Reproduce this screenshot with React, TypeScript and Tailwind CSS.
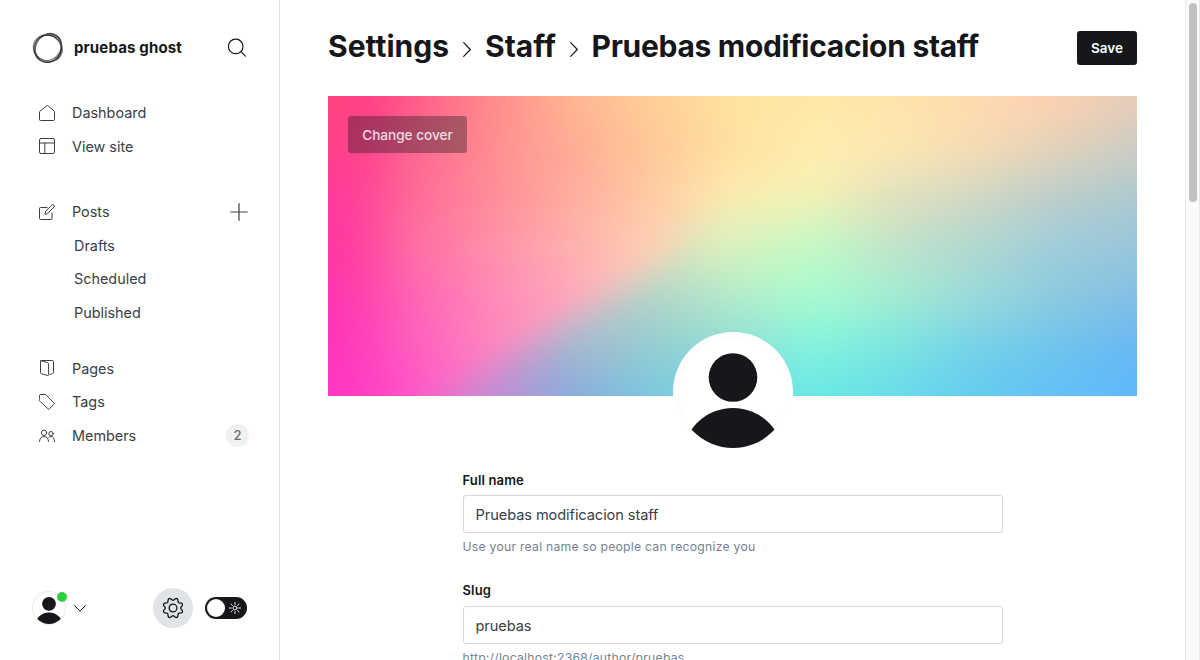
import React from "react";

const COVER_W = 809;
const COVER_H = 300;
const BLEED = 50;

const stops = [0, 0.05, 0.1, 0.2, 0.3, 0.4, 0.5, 0.6, 0.7, 0.8, 0.9, 1];

// Colour meshes of the cover: each row is a horizontal band edge, evenly spaced.
const warmMesh: string[][] = [
  ["#ff4580", "#ff3f85", "#ff5888", "#ff8a8c", "#ffb592", "#ffcf98", "#ffe39e", "#fee8a6", "#fee3aa", "#ffdab0", "#ffd0b0", "#e6cdb8"],
  ["#ff3f88", "#ff448c", "#ff6490", "#ff8c90", "#ffac94", "#ffc898", "#ffe0a0", "#ffeeb0", "#fee8b2", "#f8dcb4", "#e5d3ba", "#cecdc4"],
  ["#ff389b", "#ff4898", "#ff6898", "#ff8c9a", "#ffad9e", "#ffcba4", "#ffecb0", "#f4f2b4", "#e2e0be", "#d2d8c4", "#bccdca", "#accace"],
  ["#ff34a0", "#ff489f", "#ff6ca4", "#ff90a8", "#ffb0b0", "#ffd0b4", "#dcf2be", "#c2fac6", "#c0e4ca", "#b0d8d0", "#a0cdda", "#98c6dc"],
  ["#ff33b0", "#ff46b0", "#ff62b4", "#ff88b8", "#ffa8bc", "#fcccc0", "#b2ecca", "#a8fcd0", "#a4ecd2", "#9cdada", "#8ccade", "#84bfe4"],
  ["#ff33ba", "#ff42bc", "#ff5cc0", "#ff86be", "#ffa0c4", "#f0b8c8", "#94dcd8", "#84f4dc", "#7ce6e0", "#76d2e8", "#70c4ee", "#68b8f4"],
  ["#ff36c4", "#ff40c4", "#ff54c8", "#f87ccc", "#e894d0", "#c0b0d8", "#70dce4", "#68e8e4", "#68dcea", "#64ccf0", "#62c0f6", "#60b8fa"],
];

const coolMesh: string[][] = [
  warmMesh[0],
  warmMesh[1],
  ["#f0a0b0", "#f0a0b0", "#f0a0b0", "#f0a8b4", "#f0c4b4", "#ece0b4", "#f8ecb2", ...warmMesh[2].slice(7)],
  ["#e898b8", "#e898b8", "#e89cb8", "#e8a4bc", "#e4c4bc", "#d8dcbc", ...warmMesh[3].slice(6)],
  ["#e080c0", "#e080c0", "#e088c4", "#dca4c6", "#ccbcc6", "#b4d4c8", ...warmMesh[4].slice(6)],
  ["#e870c8", "#e870c8", "#e478cc", "#d090cc", "#a8b8d0", "#94ced0", ...warmMesh[5].slice(6)],
  ["#f050c8", "#f050c8", "#e868cc", "#c48cd4", "#88acdc", "#7cc8e0", ...warmMesh[6].slice(6)],
];

function Mesh({ id, rows }: { id: string; rows: string[][] }) {
  const bands = rows.length - 1;
  const h = COVER_H / bands;
  const wide = { x: -BLEED, width: COVER_W + 2 * BLEED };
  return (
    <g>
      <defs>
        {rows.map((row, i) => (
          <linearGradient key={i} id={`${id}-row${i}`} gradientUnits="userSpaceOnUse" x1="0" x2={COVER_W} y1="0" y2="0">
            {row.map((c, j) => (
              <stop key={j} offset={stops[j]} stopColor={c} />
            ))}
          </linearGradient>
        ))}
        <linearGradient id={`${id}-fade`} x1="0" x2="0" y1="0" y2="1">
          <stop offset="0" stopColor="#fff" stopOpacity="0" />
          <stop offset="1" stopColor="#fff" stopOpacity="1" />
        </linearGradient>
        {rows.slice(1).map((_, i) => (
          <mask key={i} id={`${id}-band${i}`} maskUnits="userSpaceOnUse" {...wide} y={i * h} height={h}>
            <rect {...wide} y={i * h} height={h} fill={`url(#${id}-fade)`} />
          </mask>
        ))}
      </defs>
      <rect {...wide} y={-BLEED} height={BLEED} fill={`url(#${id}-row0)`} />
      <rect {...wide} y={COVER_H} height={BLEED} fill={`url(#${id}-row${bands})`} />
      {rows.slice(1).map((_, i) => (
        <g key={i}>
          <rect {...wide} y={i * h} height={h} fill={`url(#${id}-row${i})`} />
          <rect {...wide} y={i * h} height={h} fill={`url(#${id}-row${i + 1})`} mask={`url(#${id}-band${i})`} />
        </g>
      ))}
    </g>
  );
}

function CoverArt() {
  const area = { x: -BLEED, y: -BLEED, width: COVER_W + 2 * BLEED, height: COVER_H + 2 * BLEED };
  return (
    <svg className="block h-full w-full overflow-hidden" viewBox={`0 0 ${COVER_W} ${COVER_H}`} preserveAspectRatio="none" aria-hidden="true">
      <defs>
        <filter id="smooth" filterUnits="userSpaceOnUse" {...area} colorInterpolationFilters="sRGB">
          <feGaussianBlur stdDeviation="14" />
        </filter>
        <filter id="edge" filterUnits="userSpaceOnUse" x="-100" y="-100" width="1100" height="600">
          <feGaussianBlur stdDeviation="16" />
        </filter>
        <mask id="cool-side" maskUnits="userSpaceOnUse" {...area}>
          <path d="M30 360L105 308 160 272 220 232 290 192 350 155 410 103 480 60H1000V460H30z" fill="#fff" filter="url(#edge)" />
        </mask>
      </defs>
      <g filter="url(#smooth)">
        <Mesh id="warm" rows={warmMesh} />
      </g>
      <g mask="url(#cool-side)">
        <g filter="url(#smooth)">
          <Mesh id="cool" rows={coolMesh} />
        </g>
      </g>
    </svg>
  );
}

type IconProps = { children: React.ReactNode; className?: string };
function Icon16({ children, className = "" }: IconProps) {
  return (
    <svg className={`block h-4 w-4 shrink-0 ${className}`} viewBox="0 0 16 16" fill="none" stroke="#394047" strokeWidth="1" strokeLinecap="round" strokeLinejoin="round">
      {children}
    </svg>
  );
}

function Logo() {
  return (
    <svg className="block h-8 w-8" viewBox="0 0 32 32" fill="none" stroke="#15171a">
      <circle cx="15.500" cy="16.800" r="13.600" strokeWidth="1.200" opacity=".7" />
      <ellipse cx="16.900" cy="15.500" rx="14.200" ry="12.500" strokeWidth="1.300" opacity=".5" transform="rotate(-50 16 16)" />
      <ellipse cx="16.500" cy="16" rx="12.600" ry="14.600" strokeWidth="1.200" opacity=".5" transform="rotate(32 16 16)" />
      <ellipse cx="16" cy="16.300" rx="14.900" ry="12.900" strokeWidth="1.100" opacity=".5" transform="rotate(25 16 16)" />
      <path d="M15 2.600c5.500-1.500 11 1 13.500 6.500" strokeWidth="2.600" opacity=".3" />
      <path d="M29.500 17c0 4-2 8-5.500 10.500" strokeWidth="2.400" opacity=".3" />
    </svg>
  );
}

function Avatar({ className }: { className: string }) {
  return (
    <svg className={className} viewBox="0 0 112 112">
      <defs>
        <clipPath id="disc">
          <circle cx="56" cy="56" r="56" />
        </clipPath>
      </defs>
      <g clipPath="url(#disc)" fill="#15171a">
        <circle cx="56" cy="41.500" r="24.300" />
        <circle cx="56" cy="122.700" r="50.700" />
      </g>
    </svg>
  );
}

const gearOutline =
  Array.from({ length: 128 }, (_, i) => {
    const a = (i / 128) * Math.PI * 2;
    const r = 8.95 - 1.25 * Math.cos(8 * a);
    return `${i === 0 ? "M" : "L"}${(11 + r * Math.cos(a)).toFixed(2)} ${(11 + r * Math.sin(a)).toFixed(2)}`;
  }).join("") + "z";

function NavItem({ label, icon, children }: { label: string; icon: React.ReactNode; children?: React.ReactNode }) {
  return (
    <a className="flex h-[33.6px] items-center pr-[31px] pl-[39px]">
      {icon}
      <span className="ml-[17px] flex-1 text-[14.4px] leading-[21.75px]">{label}</span>
      {children}
    </a>
  );
}

function SubItem({ label }: { label: string }) {
  return <a className="flex h-[33.6px] items-center pl-[74px] text-[14.4px] leading-[21.75px]">{label}</a>;
}

function Sidebar() {
  return (
    <aside className="flex h-full w-[280px] shrink-0 flex-col border-r border-[#dfe1e3] text-[#394047]">
      <div className="flex h-24 items-center pr-[32px] pl-8">
        <Logo />
        <span className="ml-[10px] flex-1 text-[15px] font-bold tracking-[0.15px] text-[#15171a]">pruebas ghost</span>
        <svg className="block h-5 w-5" viewBox="0 0 20 20" fill="none" stroke="#15171a" strokeWidth="1.200" strokeLinecap="round">
          <circle cx="8.700" cy="8.400" r="7.300" />
          <path d="M13.900 13.600L18.400 18.100" />
        </svg>
      </div>

      <nav className="flex flex-col">
        <NavItem label="Dashboard" icon={<Icon16><path d="M8 .5L.5 6.700V14.500a1 1 0 0 0 1 1h13a1 1 0 0 0 1-1V6.700z" /></Icon16>} />
        <NavItem
          label="View site"
          icon={
            <Icon16 className="-mt-px">
              <rect x=".5" y=".5" width="15" height="15" rx="1.500" />
              <path d="M.5 5h15M5.800 5v10.500" />
            </Icon16>
          }
        />
        <div className="h-8" />
        <NavItem
          label="Posts"
          icon={
            <Icon16>
              <path d="M8 3.500H1.500a1 1 0 0 0-1 1v10a1 1 0 0 0 1 1h10.500a1 1 0 0 0 1-1V9" />
              <path d="M6 10l.7-2.800 6.200-6.200a1.300 1.300 0 0 1 2 2L8.800 9.300z" />
            </Icon16>
          }
        >
          <svg className="block h-[18px] w-[18px]" viewBox="0 0 18 18" stroke="#394047" strokeWidth="1.200">
            <path d="M9 .3v17.400M.3 9h17.400" />
          </svg>
        </NavItem>
        <SubItem label="Drafts" />
        <SubItem label="Scheduled" />
        <SubItem label="Published" />
        <div className="h-[22.300px]" />
        <NavItem
          label="Pages"
          icon={
            <Icon16 className="-mt-px">
              <path d="M1.500 1.200v11.300q0 .8.8 1.100l6.200 1.900q1.100.3 1.100-.8V3.900q0-.9-.9-1.200L2 .7" />
              <path d="M2 .5h11.500q1 0 1 1v11q0 1-1 1.100L11 14.500" />
            </Icon16>
          }
        />
        <NavItem
          label="Tags"
          icon={<Icon16><path d="M.5 1.500a1 1 0 0 1 1-1h5.200L15.500 9.600 9.800 15.500.5 6.800z" /></Icon16>}
        />
        <NavItem
          label="Members"
          icon={
            <Icon16>
              <circle cx="5" cy="4.800" r="2.700" />
              <circle cx="12" cy="5.700" r="2.200" />
              <path d="M.5 13.500c0-3 1.800-5 4.500-5s4.500 2 4.500 5M9.800 9.600c.6-.8 1.300-1.100 2.200-1.100 2.100 0 3.500 1.900 3.500 5" />
            </Icon16>
          }
        >
          <span className="-mr-px flex h-[23px] w-[23px] items-center justify-center rounded-full bg-[#eff1f2] text-[13px] font-medium text-[#626d79]">2</span>
        </NavItem>
      </nav>

      <div className="mt-auto mb-8 flex h-10 items-center pl-8">
        <div className="relative h-[34px] w-[34px] rounded-full border border-[#e8eaec]">
          <Avatar className="block h-8 w-8" />
          <span className="absolute top-[-0.5px] right-[-1.500px] h-[10px] w-[10px] rounded-full bg-[#30cf43]" />
        </div>
        <svg className="ml-2 block h-[7px] w-3" viewBox="0 0 12 7" fill="none" stroke="#15171a" strokeWidth="1" strokeLinecap="round" strokeLinejoin="round">
          <path d="M.6.6L6 6.200 11.400.6" />
        </svg>
        <button className="ml-[67px] flex h-10 w-10 items-center justify-center rounded-full bg-[#e1e4e7]">
          <svg className="block h-[22px] w-[22px]" viewBox="0 0 22 22" fill="none" stroke="#15171a" strokeWidth="1.300" strokeLinejoin="round">
            <circle cx="11" cy="11" r="3.900" />
            <path d={gearOutline} />
          </svg>
        </button>
        <div className="ml-3 flex h-[22px] w-[42px] items-center justify-between rounded-full bg-[#15171a] pr-1.5 pl-0.5">
          <span className="h-[18px] w-[18px] rounded-full bg-white" />
          <svg className="block h-3 w-3" viewBox="0 0 12 12" fill="none" stroke="#fff" strokeWidth=".9" strokeLinecap="round">
            <circle cx="6" cy="6" r="2" />
            <path d="M6 .4v2M6 9.600v2M.4 6h2M9.600 6h2M2 2l1.400 1.400M8.600 8.600L10 10M10 2L8.600 3.400M3.400 8.600L2 10" />
          </svg>
        </div>
      </div>
    </aside>
  );
}

function Crumb() {
  return (
    <svg className="mt-[3px] block h-[15px] w-[8px]" viewBox="0 0 8 15" fill="none" stroke="#15171a" strokeWidth="1.200" strokeLinecap="round" strokeLinejoin="round">
      <path d="M.7.6L7.300 7.500.7 14.400" />
    </svg>
  );
}

function Field({ label, value, hint }: { label: string; value: string; hint: string }) {
  return (
    <div className="mb-[25.900px] flex flex-col">
      <label className="h-[22.400px] text-[13px] leading-[18px] font-semibold tracking-[0.15px] text-[#15171a]">{label}</label>
      <div className="mt-[2px] flex h-[38px] items-center rounded-[3px] border border-[#d5d8db] px-3 pt-[2px] text-[14.600px] leading-[22px] tracking-[-0.08px] text-[#394047]">{value}</div>
      <p className="mt-[5px] text-[12.200px] leading-[17px] tracking-[0.25px] whitespace-nowrap text-[#738393]">{hint}</p>
    </div>
  );
}

export default function App() {
  return (
    <div className="flex h-[660px] w-[1200px] overflow-hidden bg-white font-['Inter',sans-serif]">
      <Sidebar />
      <main className="flex min-w-0 flex-1 flex-col overflow-hidden pr-12 pl-12">
        <header className="flex h-24 shrink-0 items-center justify-between">
          <h1 className="flex items-center text-[30px] leading-[38px] font-bold whitespace-nowrap text-[#15171a]">
            <span className="-mt-[4px] w-[121px]">Settings</span>
            <span className="mx-[14px]"><Crumb /></span>
            <span className="-mt-[4px] w-[70.500px]">Staff</span>
            <span className="mx-[14px]"><Crumb /></span>
            <span className="-mt-[4px] tracking-[-0.300px]">Pruebas modificacion staff</span>
          </h1>
          <button className="h-[34px] w-[60px] rounded-[3px] bg-[#15171a] text-[13.500px] font-semibold text-white">Save</button>
        </header>
        <section className="relative h-[300px] w-[809px] shrink-0">
          <CoverArt />
          <button className="absolute top-5 left-5 h-[37px] w-[119px] rounded-[3px] bg-[rgba(21,23,26,0.36)] pt-[1.500px] text-[13.600px] font-medium text-white/80">
            Change cover
          </button>
          <div className="absolute top-[236px] left-[345px] flex h-[120px] w-[120px] items-center justify-center rounded-full bg-white">
            <div className="h-[112px] w-[112px] rounded-full shadow-[inset_0_0_0_1px_#fafafa]">
              <Avatar className="block h-[112px] w-[112px]" />
            </div>
          </div>
        </section>
        <form className="mt-[75px] ml-[134.500px] flex w-[540.500px] shrink-0 flex-col">
          <Field label="Full name" value="Pruebas modificacion staff" hint="Use your real name so people can recognize you" />
          <Field label="Slug" value="pruebas" hint="http://localhost:2368/author/pruebas" />
        </form>
      </main>
      <div className="flex h-full w-[15px] shrink-0 justify-center border-x border-[#e8e8e8] bg-[#fafafa] pt-[3px]">
        <div className="h-[199px] w-2 rounded-full bg-[#c1c1c1]" />
      </div>
    </div>
  );
}
